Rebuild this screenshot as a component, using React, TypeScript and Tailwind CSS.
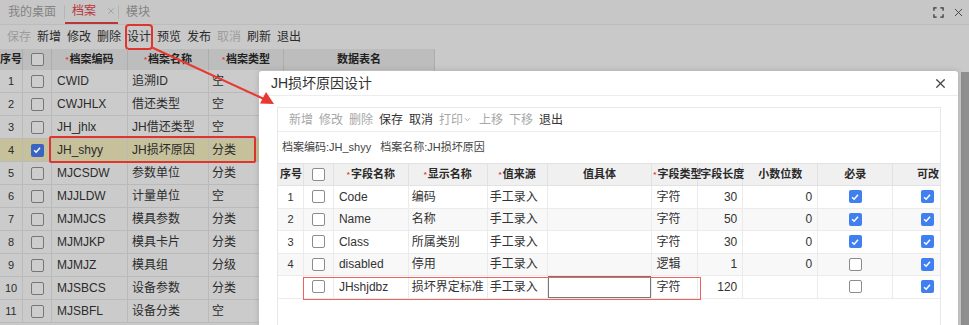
import { X } from "lucide-react";

type BgRow = { no: number; code: string; name: string; type: string; checked?: boolean };
type FieldRow = {
  no?: number;
  field: string;
  label: string;
  source: string;
  ftype: string;
  len: string;
  dec: string;
  must: boolean;
  edit: boolean;
};

const bgRows: BgRow[] = [
  { no: 1, code: "CWID", name: "追溯ID", type: "空" },
  { no: 2, code: "CWJHLX", name: "借还类型", type: "空" },
  { no: 3, code: "JH_jhlx", name: "JH借还类型", type: "空" },
  { no: 4, code: "JH_shyy", name: "JH损坏原因", type: "分类", checked: true },
  { no: 5, code: "MJCSDW", name: "参数单位", type: "分类" },
  { no: 6, code: "MJJLDW", name: "计量单位", type: "空" },
  { no: 7, code: "MJMJCS", name: "模具参数", type: "分类" },
  { no: 8, code: "MJMJKP", name: "模具卡片", type: "分类" },
  { no: 9, code: "MJMJZ", name: "模具组", type: "分级" },
  { no: 10, code: "MJSBCS", name: "设备参数", type: "分类" },
  { no: 11, code: "MJSBFL", name: "设备分类", type: "空" },
];

const fields: FieldRow[] = [
  { no: 1, field: "Code", label: "编码", source: "手工录入", ftype: "字符", len: "30", dec: "0", must: true, edit: true },
  { no: 2, field: "Name", label: "名称", source: "手工录入", ftype: "字符", len: "50", dec: "0", must: true, edit: true },
  { no: 3, field: "Class", label: "所属类别", source: "手工录入", ftype: "字符", len: "30", dec: "0", must: true, edit: true },
  { no: 4, field: "disabled", label: "停用", source: "手工录入", ftype: "逻辑", len: "1", dec: "0", must: false, edit: true },
  { field: "JHshjdbz", label: "损坏界定标准", source: "手工录入", ftype: "字符", len: "120", dec: "", must: false, edit: true },
];

const Check = ({ on, dim }: { on?: boolean; dim?: boolean }) =>
  on ? (
    <span
      className={`flex h-[13px] w-[13px] items-center justify-center rounded-[2px] ${dim ? "bg-[#3a64c4]" : "bg-[#3f7ff0]"}`}
    >
      <svg viewBox="0 0 12 12" className="h-[10px] w-[10px]">
        <path d="M2.5 6.2 L5 8.6 L9.6 3.4" fill="none" stroke="white" strokeWidth="1.8" />
      </svg>
    </span>
  ) : (
    <span
      className={`block h-[13px] w-[13px] rounded-[2px] border ${dim ? "border-[#767676] bg-[#cdcdcd]" : "border-[#8c8c8c] bg-white"}`}
    />
  );

const Star = () => <span className="mr-[1px] text-[8px] text-[#e23b3b]">*</span>;

export default function App() {
  const bgTools = ["保存", "新增", "修改", "删除", "设计", "预览", "发布", "取消", "刷新", "退出"];
  const bgOff = ["保存", "取消"];

  return (
    <div className="relative h-[325px] w-[969px] overflow-hidden bg-[#c9c9c9] font-['Liberation_Sans','Noto_Sans_CJK_SC',sans-serif] text-[12px] text-[#2b2b2b]">
      {/* page under the dialog */}
      <div className="flex h-[25px] items-end border-b border-[#bcbcbc] bg-[#c7c7c7]">
        <div className="flex h-full items-center px-[8px] text-[12px] text-[#848484]">我的桌面</div>
        <div className="mb-[5px] h-[14px] w-px bg-[#b5b5b5]" />
        <div className="flex h-full w-[53px] items-center gap-[10px] border-b-2 border-[#b8353c] pl-[7px] text-[#b8353c]">
          <span>档案</span>
          <X className="h-[10px] w-[10px] text-[#8e8e8e]" strokeWidth={1.5} />
        </div>
        <div className="mb-[5px] h-[14px] w-px bg-[#b5b5b5]" />
        <div className="flex h-full items-center px-[7px] text-[#848484]">模块</div>
        <div className="ml-auto flex h-full items-center gap-[8px] pr-[4px]">
          <svg viewBox="0 0 12 12" className="h-[11px] w-[11px]">
            <path d="M1 4V1h3M8 1h3v3M11 8v3H8M4 11H1V8" fill="none" stroke="#3a3a3a" strokeWidth="1.4" />
          </svg>
          <X className="h-[13px] w-[13px] text-[#3a3a3a]" strokeWidth={1.6} />
        </div>
      </div>

      <div className="flex h-[24px] items-center gap-[6px] px-[7px]">
        {bgTools.map((t) => (
          <span
            key={t}
            className={`flex h-[22px] w-[24px] shrink-0 items-center justify-center ${
              t === "设计" ? "outline-2 outline-[#e0342e] rounded-[2px]" : ""
            } ${bgOff.includes(t) ? "text-[#9c9c9c]" : "text-[#2b2b2b]"}`}
          >
            {t}
          </span>
        ))}
      </div>

      <div className="w-[435px]">
        <div className="flex h-[21px] whitespace-nowrap bg-[#bdbdbd] text-[11px] font-bold text-[#222]">
          <div className="flex w-[23px] items-center border-r border-[#adadad]">序号</div>
          <div className="flex w-[29px] items-center justify-center border-r border-[#adadad]">
            <Check dim />
          </div>
          <div className="flex w-[76px] items-center justify-center border-r border-[#adadad]">
            <Star />档案编码
          </div>
          <div className="flex w-[81px] items-center justify-center border-r border-[#adadad]">
            <Star />档案名称
          </div>
          <div className="flex w-[75px] items-center justify-center border-r border-[#adadad]">
            <Star />档案类型
          </div>
          <div className="flex w-[151px] items-center justify-center border-r border-[#adadad]">数据表名</div>
        </div>
        {bgRows.map((r) => (
          <div
            key={r.no}
            className={`flex h-[23px] border-b border-[#bababa] ${r.checked ? "bg-[#c6c19b]" : "bg-[#cbcbcb]"}`}
          >
            <div className="flex w-[23px] items-center justify-center border-r border-[#bababa] text-[11px]">{r.no}</div>
            <div className="flex w-[29px] items-center justify-center border-r border-[#bababa]">
              <Check on={r.checked} dim />
            </div>
            <div className="flex w-[76px] items-center border-r border-[#bababa] pl-[5px]">{r.code}</div>
            <div className="flex w-[81px] items-center border-r border-[#bababa] pl-[4px]">{r.name}</div>
            <div className="flex w-[75px] items-center border-r border-[#bababa] pl-[3px]">{r.type}</div>
            <div className="w-[151px] border-r border-[#bababa]" />
          </div>
        ))}
      </div>

      {/* highlighted row frame */}
      <div className="absolute left-[49px] top-[136px] h-[27px] w-[207px] rounded-[2px] border-2 border-[#e0342e]" />

      {/* scrollbar on the right */}
      <div className="absolute right-0 top-[72px] h-[253px] w-[8px] bg-[#8f8f8f]" />

      {/* dialog */}
      <div className="absolute left-[259px] top-[71px] h-[270px] w-[699px] rounded-t-[3px] bg-white shadow-[0_0_6px_rgba(0,0,0,0.15)]">
        <div className="flex h-[25px] items-center border-b border-[#ededed] pl-[12px] pr-[10px]">
          <span className="text-[14px] text-[#333]">JH损坏原因设计</span>
          <X className="ml-auto h-[15px] w-[15px] text-[#444]" strokeWidth={2} />
        </div>

        <div className="ml-[18px] mr-[17px] mt-[11px] border border-[#e8e8e8] text-[#333]">
          <div className="flex h-[24px] items-center gap-[6px] border-b border-[#ececec] pl-[11px]">
            {["新增", "修改", "删除", "保存", "取消"].map((t, i) => (
              <span key={t} className={`w-[24px] ${i < 3 ? "text-[#a8a8a8]" : "text-[#333]"}`}>
                {t}
              </span>
            ))}
            <span className="flex w-[34px] items-center text-[#a8a8a8]">
              打印
              <svg viewBox="0 0 8 6" className="ml-[1px] h-[5px] w-[7px]">
                <path d="M1 1.5 L4 4.5 L7 1.5" fill="none" stroke="#a8a8a8" strokeWidth="1.2" />
              </svg>
            </span>
            <span className="w-[24px] text-[#a8a8a8]">上移</span>
            <span className="w-[24px] text-[#a8a8a8]">下移</span>
            <span className="w-[24px]">退出</span>
          </div>

          <div className="flex h-[31px] items-center gap-[9px] pl-[4px] text-[11px] text-[#444]">
            <span>档案编码:JH_shyy</span>
            <span>档案名称:JH损坏原因</span>
          </div>

          <div className="flex h-[23px] whitespace-nowrap border-y border-[#e2e2e2] bg-[#f0f0f0] text-[11px] font-bold text-[#2a2a2a]">
            <div className="flex w-[26px] items-center border-r border-[#e2e2e2] pl-[2px]">序号</div>
            <div className="flex w-[30px] items-center justify-center border-r border-[#e2e2e2]">
              <Check />
            </div>
            <div className="flex w-[75px] items-center justify-center border-r border-[#e2e2e2]">
              <Star />字段名称
            </div>
            <div className="flex w-[79px] items-center justify-center border-r border-[#e2e2e2]">
              <Star />显示名称
            </div>
            <div className="flex w-[60px] items-center justify-center border-r border-[#e2e2e2]">
              <Star />值来源
            </div>
            <div className="flex w-[105px] items-center justify-center border-r border-[#e2e2e2]">值具体</div>
            <div className="flex w-[46px] items-center border-r border-[#e2e2e2] pl-[1px]">
              <Star />字段类型
            </div>
            <div className="flex w-[45px] items-center border-r border-[#e2e2e2] pl-[2px]">字段长度</div>
            <div className="flex w-[75px] items-center justify-center border-r border-[#e2e2e2]">小数位数</div>
            <div className="flex w-[75px] items-center justify-center border-r border-[#e2e2e2]">必录</div>
            <div className="flex w-[47px] items-center justify-end pr-[1px]">可改</div>
          </div>

          {fields.map((f, i) => {
            const last = i === fields.length - 1;
            return (
              <div
                key={f.field}
                className={`relative flex h-[22.5px] border-b border-[#ebebeb] ${i % 2 === 1 ? "bg-[#f8f8f8]" : "bg-white"}`}
              >
                <div className="flex w-[26px] items-center justify-center border-r border-[#ebebeb] text-[11px]">{f.no ?? ""}</div>
                <div className="flex w-[30px] items-center justify-center border-r border-[#ebebeb]">
                  <Check />
                </div>
                <div className="flex w-[75px] items-center border-r border-[#ebebeb] pl-[5px]">{f.field}</div>
                <div className="flex w-[79px] items-center border-r border-[#ebebeb] pl-[3px]">{f.label}</div>
                <div className="flex w-[60px] items-center border-r border-[#ebebeb] pl-[2px]">{f.source}</div>
                <div className="w-[105px] border-r border-[#ebebeb]">
                  {last && <div className="h-full w-full border border-[#777]" />}
                </div>
                <div className="flex w-[46px] items-center border-r border-[#ebebeb] pl-[4px]">{f.ftype}</div>
                <div className="flex w-[45px] items-center justify-end border-r border-[#ebebeb] pr-[5px]">{f.len}</div>
                <div className="flex w-[75px] items-center justify-end border-r border-[#ebebeb] pr-[5px]">{f.dec}</div>
                <div className="flex w-[75px] items-center justify-center border-r border-[#ebebeb]">
                  <Check on={f.must} />
                </div>
                <div className="flex w-[47px] items-center justify-end pr-[6px]">
                  <Check on={f.edit} />
                </div>
                {last && (
                  <div className="pointer-events-none absolute left-[25px] top-[1px] h-[23px] w-[398px] border border-[#f0625c]" />
                )}
              </div>
            );
          })}
          <div className="h-[40px]" />
        </div>
      </div>

      {/* pointer arrow from 设计 to the dialog */}
      <svg className="pointer-events-none absolute left-0 top-0" width="969" height="325">
        <line x1="151" y1="47" x2="264" y2="99" stroke="#e8382f" strokeWidth="2" />
        <polygon points="274,104 260,103.5 266,92" fill="#e8382f" />
      </svg>
    </div>
  );
}
